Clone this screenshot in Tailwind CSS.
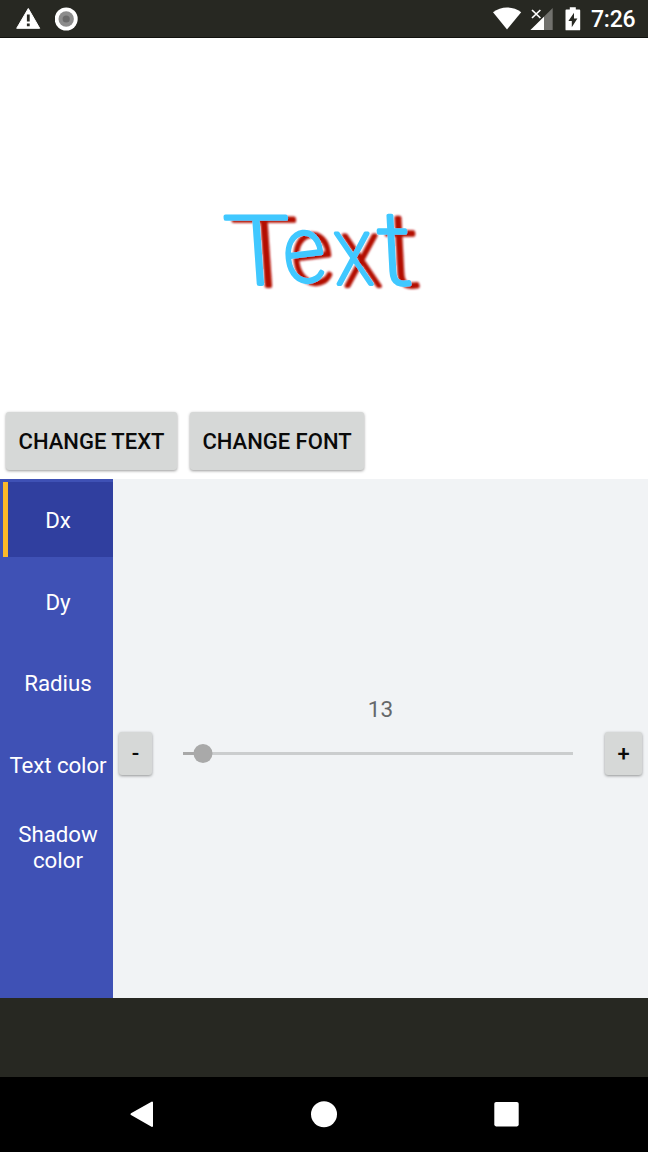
<!DOCTYPE html>
<html lang="en">
<head>
<meta charset="utf-8">
<title>Text shadow</title>
<script src="https://cdn.jsdelivr.net/npm/@tailwindcss/browser@4"></script>
</head>
<body class="w-[648px] h-[1152px] overflow-hidden flex flex-col bg-black font-['Roboto',sans-serif]">
  <header class="h-[38px] shrink-0 bg-[#272822] border-b border-[#11120e] flex items-center justify-between pl-4 pr-[13px] text-white">
    <div class="flex items-center gap-[14px]">
      <svg class="w-[25px] h-[24px]" viewBox="0 0 25 24"><path d="M12.3 1.5 23.7 21.3H.7Z" fill="#fff" stroke="#fff" stroke-linejoin="round"/><path d="M12.3 7.5v7M12.3 16.4v2.8" stroke="#272822" stroke-width="2.8"/></svg>
      <svg class="size-6" viewBox="0 0 24 24"><circle cx="11.2" cy="12" r="11.5" fill="#fff"/><circle cx="11.2" cy="12" r="7.7" fill="#8c8c8c"/><circle cx="11.2" cy="12" r="3.6" fill="#6b6b6b"/></svg>
    </div>
    <div class="flex items-center">
      <svg class="w-[99px] h-[37px]" viewBox="492 0 99 37"><path d="M493 12.3C501 6 513 6 521.2 12.3L507 29.5Z" fill="#fff"/><path d="M552.7 8V30H530.5Z" fill="#71716d"/><path d="M544 16.7V30H530.5Z" fill="#fff"/><path d="M532 10l8.4 8M540.4 10l-8.4 8" stroke="#272822" stroke-width="4"/><path d="M532 10l8.4 8M540.4 10l-8.4 8" stroke="#fff" stroke-width="1.7"/><path d="M566.3 9.5h3.5V7.3h6v2.2h3.6q.8 0 .8.9v19q0 .9-.8.9h-13.1q-.8 0-.8-.9v-19q0-.9.8-.9Z" fill="#fff"/><path d="M574 12.8v5.7h3.4l-5.6 8.8v-6.2h-3.4Z" fill="#272822"/></svg>
      <span class="text-[23px] leading-[38px] w-[44px] whitespace-nowrap pt-[3px] font-medium tracking-[-0.2px]">7:26</span>
    </div>
  </header>

  <section class="h-[441px] shrink-0 bg-white flex flex-col">
    <svg class="w-[648px] h-[374px] shrink-0" viewBox="0 38 648 374" role="img" aria-label="Text">
      <defs><filter id="shade" x="-10%" y="-10%" width="125%" height="125%"><feDropShadow dx="8" dy="2" stdDeviation="1" flood-color="#b30d04"/></filter></defs>
      <g font-family="Roboto" font-weight="100" fill="#40c8ff" stroke="#40c8ff" stroke-width="3.8" stroke-linejoin="round" filter="url(#shade)"><text transform="translate(227.5 283.5) skewX(4) scale(1.16 1)" font-size="95">T</text><text transform="translate(287 284) rotate(-7) scale(.88 1)" font-size="93">e</text><text transform="translate(336 284) skewX(4) scale(.84 1)" font-size="96">x</text><text transform="translate(379.5 283.5) skewX(3) scale(1.06 1)" font-size="102">t</text></g>
    </svg>
    <div class="flex gap-[13px] px-[6px]">
      <button class="w-[171px] h-[58px] rounded-[3px] bg-[#d6d8d7] shadow-[0_1px_3px_rgba(0,0,0,0.4)] text-[22px] font-medium text-[#0a0a0a] whitespace-nowrap">CHANGE TEXT</button>
      <button class="w-[174px] h-[58px] rounded-[3px] bg-[#d6d8d7] shadow-[0_1px_3px_rgba(0,0,0,0.4)] text-[22px] font-medium text-[#0a0a0a] whitespace-nowrap">CHANGE FONT</button>
    </div>
  </section>

  <main class="h-[519px] shrink-0 flex bg-[#f1f3f5]">
    <nav class="w-[113px] shrink-0 bg-[#3f51b5] pl-[3px] pt-[3px] text-white text-[22.3px] leading-[26px] text-center">
      <div class="h-[75px] bg-[#303f9f] border-l-[5px] border-[#fbb829] flex items-center justify-center pr-[5px]">Dx</div>
      <div class="h-[7px]"></div>
      <div class="h-[75px] flex items-center justify-center">Dy</div>
      <div class="h-[6px]"></div>
      <div class="h-[76px] flex items-center justify-center">Radius</div>
      <div class="h-[6px]"></div>
      <div class="h-[75px] flex items-center justify-center whitespace-nowrap tracking-[-0.1px]">Text color</div>
      <div class="h-[7px]"></div>
      <div class="h-[76px] flex items-center justify-center">Shadow<br>color</div>
    </nav>
    <div class="flex-1 pt-[216px]">
      <div class="text-[22.5px] leading-7 text-[#66686a] text-center">13</div>
      <div class="flex items-center mt-[9px] pl-[6px] pr-[6px]">
        <button class="w-[33px] h-[43px] rounded-[3px] bg-[#d6d8d7] shadow-[0_1px_3px_rgba(0,0,0,0.4)] text-[22px] font-medium text-[#0a0a0a]">-</button>
        <svg class="w-[390px] h-6 ml-[31px] mr-[32px]" viewBox="0 0 390 24"><path d="M0 11.5H390" stroke="#cbcdce" stroke-width="3"/><path d="M0 11.5H20" stroke="#a8a8a8" stroke-width="3"/><circle cx="20" cy="11.5" r="9.5" fill="#a9a9a9"/></svg>
        <button class="w-[37px] h-[43px] rounded-[3px] bg-[#d6d8d7] shadow-[0_1px_3px_rgba(0,0,0,0.4)] text-[22px] font-medium text-[#0a0a0a]">+</button>
      </div>
    </div>
  </main>

  <div class="h-[79px] shrink-0 bg-[#272822]"></div>
  <footer class="flex-1 flex items-start pt-[24px]">
    <svg class="w-[648px] h-[28px]" viewBox="0 1101 648 28" fill="#fff"><path d="M131.5 1114.2 152 1102.5V1126Z" stroke="#fff" stroke-width="2" stroke-linejoin="round"/><circle cx="324" cy="1114.2" r="13"/><rect x="494.3" y="1102" width="24.4" height="24.4" rx="1.8"/></svg>
  </footer>
</body>
</html>
